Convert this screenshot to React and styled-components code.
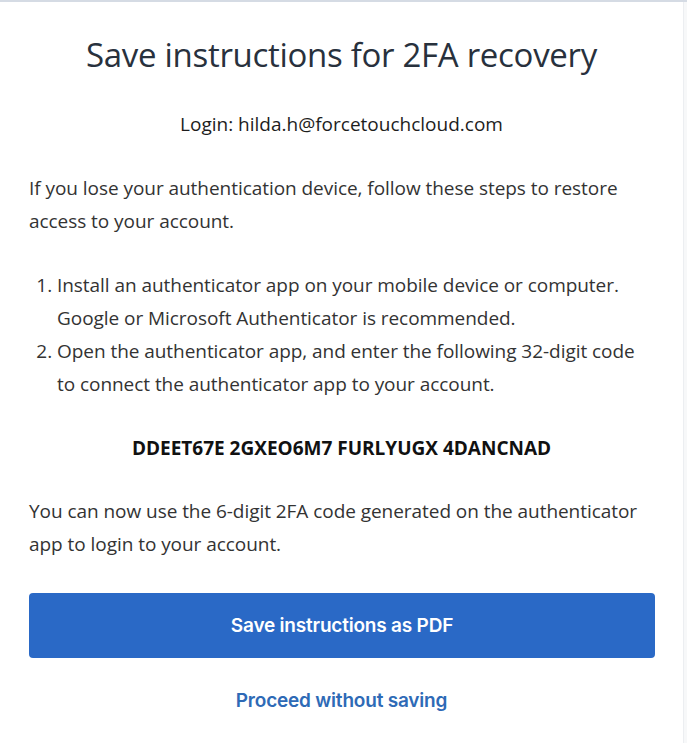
import styled, { createGlobalStyle } from 'styled-components';

const Global = createGlobalStyle`
  html, body {
    margin: 0;
    padding: 0;
    background: #f7f8f9;
  }
  * { box-sizing: border-box; }
`;

const Page = styled.div`
  display: flex;
  min-height: 743px;
  border-top: 2px solid #d5dbe4;
`;

const Modal = styled.div`
  width: 684px;
  background: #ffffff;
  border-right: 1px solid #eceef1;
  padding: 30px 29px 0 29px;
  font-family: "Open Sans", "Liberation Sans", sans-serif;
  color: #333;
`;

const Title = styled.h1`
  margin: 0;
  text-align: center;
  font-weight: 400;
  font-size: 33px;
  letter-spacing: -0.3px;
  color: #28313d;
  line-height: 46px;
`;

const Login = styled.p`
  margin: 33px 0 0;
  text-align: center;
  font-size: 19px;
  line-height: 26px;
  color: #1d1d1d;
`;

const Text = styled.p`
  margin: ${p => p.$top || 0}px 0 0;
  font-size: 19px;
  line-height: 32.7px;
  letter-spacing: -0.05px;
`;

const Steps = styled.ol`
  margin: 32px 0 0;
  padding-left: 28px;
  font-size: 19px;
  line-height: 32.7px;
  letter-spacing: -0.05px;
`;

const Code = styled.div`
  margin-top: 35px;
  text-align: center;
  font-weight: 700;
  font-size: 19px;
  line-height: 26px;
  color: #111;
`;

const PrimaryButton = styled.button`
  display: block;
  width: 626px;
  height: 65px;
  margin-top: 32px;
  border: none;
  border-radius: 4px;
  background: #2a69c6;
  color: #fff;
  font-family: Inter, "Liberation Sans", sans-serif;
  font-weight: 600;
  font-size: 19px;
  letter-spacing: -0.2px;
`;

const LinkButton = styled.button`
  display: block;
  margin: 31px auto 0;
  padding: 0;
  border: none;
  background: none;
  color: #2e6ab6;
  font-family: Inter, "Liberation Sans", sans-serif;
  font-weight: 600;
  font-size: 19px;
  line-height: 23px;
  letter-spacing: -0.2px;
`;

const Side = styled.div`
  flex: 1;
`;

export default function App() {
  return (
    <>
      <Global />
      <Page>
        <Modal>
          <Title>Save instructions for 2FA recovery</Title>
          <Login>Login: hilda.h@forcetouchcloud.com</Login>
          <Text $top={35}>
            If you lose your authentication device, follow these steps to restore access to your account.
          </Text>
          <Steps>
            <li>Install an authenticator app on your mobile device or computer. Google or Microsoft Authenticator is recommended.</li>
            <li>Open the authenticator app, and enter the following 32-digit code to connect the authenticator app to your account.</li>
          </Steps>
          <Code>DDEET67E 2GXEO6M7 FURLYUGX 4DANCNAD</Code>
          <Text $top={34}>
            You can now use the 6-digit 2FA code generated on the authenticator app to login to your account.
          </Text>
          <PrimaryButton>Save instructions as PDF</PrimaryButton>
          <LinkButton>Proceed without saving</LinkButton>
        </Modal>
        <Side />
      </Page>
    </>
  );
}
